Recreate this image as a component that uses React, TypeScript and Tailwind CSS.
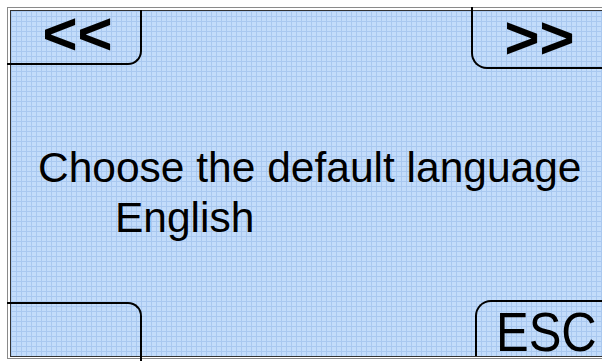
import React from 'react';

const GRID =
  'bg-[#c3dcfa] bg-[linear-gradient(to_right,#a9c8f0_1px,transparent_1px),linear-gradient(to_bottom,#a9c8f0_1px,transparent_1px)] bg-[size:5px_5px]';

export default function App() {
  return (
    <div className="w-[602px] h-[361px] bg-white overflow-hidden font-['Liberation_Sans',Arial,sans-serif] text-black">
      {/* double frame */}
      <div className="ml-[7px] mt-[7px] h-[352px] border-l border-t border-b border-[#8a8a8a] pl-[2px] pt-[2px] pb-[1px]">
        <div className={`h-full flex flex-col border-l border-t border-b border-[#333] ${GRID}`}>
          {/* top row */}
          <div className="flex items-start justify-between">
            <div className="-ml-[4px] -mt-[1px] w-[135px] h-[55px] border-r-2 border-b-2 border-black rounded-br-[14px] flex items-center justify-center pl-[8px] pb-[6px]">
              <span className="text-[60px] font-bold leading-none">&lt;&lt;</span>
            </div>
            <div className="-mt-[4px] w-[131px] h-[62px] border-l-2 border-b-2 border-black rounded-bl-[16px] flex items-center justify-center pt-[2px] pl-[4px]">
              <span className="text-[60px] font-bold leading-none">&gt;&gt;</span>
            </div>
          </div>

          {/* message */}
          <div className="mt-[74px] pl-[27px] text-[42.5px] leading-[50px]">
            <div>Choose the default language</div>
            <div className="pl-[77px]">English</div>
          </div>

          {/* bottom row */}
          <div className="mt-auto flex items-end justify-between">
            <div className="-ml-[4px] -mb-[6px] w-[135px] h-[60px] border-t-2 border-r-2 border-black rounded-tr-[14px]" />
            <div className="w-[127px] h-[56px] border-t-2 border-l-2 border-black rounded-tl-[16px] pl-[19px] pt-[6px]">
              <span className="inline-block origin-top scale-y-[1.15] text-[49px] leading-[40px]">ESC</span>
            </div>
          </div>
        </div>
      </div>
    </div>
  );
}
